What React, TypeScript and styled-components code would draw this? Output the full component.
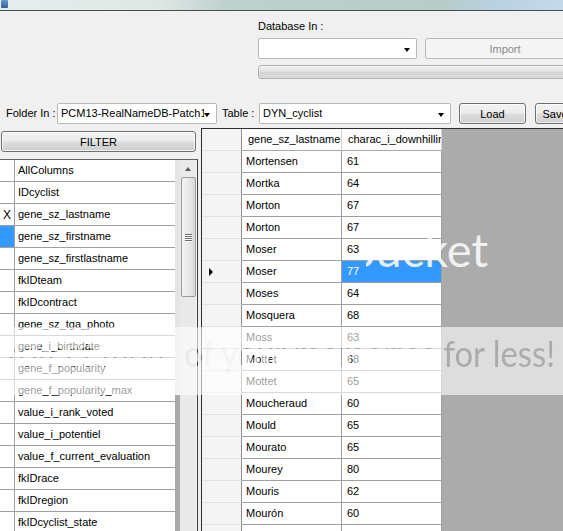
import styled, { createGlobalStyle } from 'styled-components';

const GlobalStyle = createGlobalStyle`
  html, body {
    margin: 0;
    padding: 0;
  }
  body {
    background: #f0f0f0;
    font-family: "Liberation Sans", Arial, sans-serif;
    font-size: 11px;
    color: #000;
    overflow: hidden;
  }
`;

const Window = styled.div`
  position: relative;
  width: 563px;
  height: 531px;
  overflow: hidden;
  display: flex;
  flex-direction: column;
  background: #f0f0f0;
`;

const TitleStrip = styled.div`
  height: 10px;
  flex: none;
  display: flex;
  border-bottom: 1px solid #44524f;
  background: linear-gradient(
    90deg,
    #e8eded 0%,
    #dfe7e5 28%,
    #bfd1ce 40%,
    #b8ccc8 78%,
    #b9d1e2 88%,
    #c5d9ea 100%
  );
`;

const AppIcon = styled.span`
  width: 7px;
  height: 8px;
  margin-left: 1px;
  background: linear-gradient(180deg, #6b97cf, #2f5f9f);
  border-radius: 1px;
`;

const TopPanel = styled.div`
  height: 117px;
  flex: none;
  display: flex;
  flex-direction: column;
  overflow: hidden;
`;

const DbBlock = styled.div`
  padding: 9px 0 0 258px;
  display: flex;
  flex-direction: column;
`;

const Label = styled.span<{ $w?: number }>`
  line-height: 13px;
  white-space: nowrap;
  ${(p) => (p.$w ? `width: ${p.$w}px; flex: none;` : '')}
`;

const DbRow = styled.div`
  display: flex;
  gap: 8px;
  margin-top: 5px;
`;

const Combo = styled.div<{ $w: number }>`
  position: relative;
  box-sizing: border-box;
  width: ${(p) => p.$w}px;
  height: 21px;
  flex: none;
  border: 1px solid #b5b8bd;
  border-radius: 2px;
  background: #fff;
  display: flex;
  align-items: center;
  padding: 0 12px 0 3px;
  overflow: hidden;
  white-space: nowrap;
`;

const ComboText = styled.span`
  overflow: hidden;
  white-space: nowrap;
  line-height: 13px;
`;

const Arrow = styled.span`
  position: absolute;
  right: 6px;
  top: 50%;
  margin-top: -1px;
  width: 0;
  height: 0;
  border-left: 3.5px solid transparent;
  border-right: 3.5px solid transparent;
  border-top: 4px solid #000;
`;

const Button = styled.div<{ $w: number; $disabled?: boolean }>`
  box-sizing: border-box;
  width: ${(p) => p.$w}px;
  height: 21px;
  flex: none;
  display: flex;
  align-items: center;
  justify-content: center;
  border-radius: 3px;
  border: 1px solid ${(p) => (p.$disabled ? '#b7babc' : '#707070')};
  color: ${(p) => (p.$disabled ? '#8a8a8a' : '#000')};
  background: ${(p) =>
    p.$disabled
      ? '#f4f4f4'
      : 'linear-gradient(180deg, #f3f3f3 0%, #ebebeb 48%, #dddddd 52%, #cfcfcf 100%)'};
  box-shadow: ${(p) => (p.$disabled ? 'none' : 'inset 0 0 0 1px rgba(255,255,255,0.7)')};
  white-space: nowrap;
`;

const Progress = styled.div`
  box-sizing: border-box;
  margin-top: 6px;
  height: 14px;
  width: 320px;
  border: 1px solid #b2b2b2;
  border-radius: 3px;
  background: linear-gradient(180deg, #f3f3f3 0%, #e2e2e2 45%, #d3d3d3 55%, #dcdcdc 100%);
`;

const ToolRow = styled.div`
  display: flex;
  align-items: center;
  margin-top: 23px;
  padding-left: 6px;
  height: 23px;
`;

const Spacer = styled.span<{ $w: number }>`
  width: ${(p) => p.$w}px;
  flex: none;
`;

const Main = styled.div`
  flex: 1;
  display: flex;
  min-height: 0;
`;

const LeftPanel = styled.div`
  width: 198px;
  flex: none;
  display: flex;
  flex-direction: column;
  padding-top: 3px;
`;

const FilterButton = styled(Button)`
  margin-left: 1px;
`;

const LeftGrid = styled.div`
  margin-top: 7px;
  flex: 1;
  display: flex;
  border-top: 1px solid #646464;
  border-right: 1px solid #3c3c3c;
  background: #fff;
  overflow: hidden;
`;

const FieldList = styled.div`
  width: 175px;
  flex: none;
`;

const FieldRow = styled.div`
  box-sizing: border-box;
  height: 22px;
  display: grid;
  grid-template-columns: 15px 1fr;
  border-bottom: 1px solid #a0a0a0;
`;

const FieldHead = styled.div<{ $sel?: boolean }>`
  border-right: 1px solid #a0a0a0;
  background: ${(p) => (p.$sel ? '#3399ff' : '#fff')};
  display: flex;
  align-items: center;
  justify-content: center;
  font-size: 12px;
`;

const FieldCell = styled.div`
  padding-left: 3px;
  line-height: 21px;
  white-space: nowrap;
  overflow: hidden;
`;

const Gutter = styled.div`
  width: 5px;
  flex: none;
  background: linear-gradient(180deg, #e4e4e4 0px, #e4e4e4 235px, #a9a9a9 235px, #a9a9a9 100%);
`;

const ScrollBar = styled.div`
  width: 16px;
  flex: none;
  background: #e9e9e9;
  display: flex;
  flex-direction: column;
  align-items: center;
  border-right: 1px solid #f4f4f4;
`;

const ScrollUp = styled.div`
  height: 17px;
  width: 16px;
  display: flex;
  align-items: center;
  justify-content: center;
  &::after {
    content: '';
    border-left: 3.5px solid transparent;
    border-right: 3.5px solid transparent;
    border-bottom: 4px solid #5a5a5a;
  }
`;

const Thumb = styled.div`
  box-sizing: border-box;
  width: 15px;
  height: 120px;
  border: 1px solid #9a9a9a;
  border-radius: 2px;
  background: linear-gradient(90deg, #f3f3f3 0%, #e9e9e9 50%, #d9d9d9 100%);
  display: flex;
  flex-direction: column;
  align-items: center;
  justify-content: center;
  gap: 1px;
`;

const Grip = styled.span`
  width: 7px;
  height: 1px;
  background: #6a6a6a;
  box-shadow: 0 1px 0 #fff;
`;

const Between = styled.div`
  width: 3px;
  flex: none;
`;

const DataGrid = styled.div`
  flex: 1;
  border-top: 1px solid #2e2e2e;
  border-left: 1px solid #2e2e2e;
  background: #ababab;
  overflow: hidden;
`;

const DataRow = styled.div`
  box-sizing: border-box;
  height: 22px;
  display: grid;
  grid-template-columns: 40px 100px 100px;
`;

const RowHead = styled.div`
  box-sizing: border-box;
  background: #f4f4f4;
  border-right: 1px solid #8e8e8e;
  border-bottom: 1px solid #e2e2e2;
  display: flex;
  align-items: center;
  padding-left: 7px;
`;

const HeadCell = styled.div`
  box-sizing: border-box;
  background: #fcfcfc;
  border-right: 1px solid #d6d6d6;
  border-bottom: 1px solid #a8a8a8;
  padding-left: 6px;
  line-height: 21px;
  white-space: nowrap;
  overflow: hidden;
`;

const Cell = styled.div<{ $sel?: boolean; $pad: number }>`
  box-sizing: border-box;
  background: ${(p) => (p.$sel ? '#3399ff' : '#fff')};
  color: ${(p) => (p.$sel ? '#fff' : '#000')};
  border-right: 1px solid #a0a0a0;
  border-bottom: 1px solid #a0a0a0;
  padding-left: ${(p) => p.$pad}px;
  line-height: 21px;
  white-space: nowrap;
  overflow: hidden;
`;

const Pointer = styled.span`
  width: 0;
  height: 0;
  border-top: 4px solid transparent;
  border-bottom: 4px solid transparent;
  border-left: 4px solid #000;
`;

const Watermark = styled.svg`
  position: absolute;
  left: 0;
  top: 0;
  pointer-events: none;
`;

const fields: { name: string; mark?: string; sel?: boolean }[] = [
  { name: 'AllColumns' },
  { name: 'IDcyclist' },
  { name: 'gene_sz_lastname', mark: 'X' },
  { name: 'gene_sz_firstname', sel: true },
  { name: 'gene_sz_firstlastname' },
  { name: 'fkIDteam' },
  { name: 'fkIDcontract' },
  { name: 'gene_sz_tga_photo' },
  { name: 'gene_i_birthdate' },
  { name: 'gene_f_popularity' },
  { name: 'gene_f_popularity_max' },
  { name: 'value_i_rank_voted' },
  { name: 'value_i_potentiel' },
  { name: 'value_f_current_evaluation' },
  { name: 'fkIDrace' },
  { name: 'fkIDregion' },
  { name: 'fkIDcyclist_state' },
];

const cyclists: [string, string][] = [
  ['Mortensen', '61'],
  ['Mortka', '64'],
  ['Morton', '67'],
  ['Morton', '67'],
  ['Moser', '63'],
  ['Moser', '77'],
  ['Moses', '64'],
  ['Mosquera', '68'],
  ['Moss', '63'],
  ['Mottet', '68'],
  ['Mottet', '65'],
  ['Moucheraud', '60'],
  ['Mould', '65'],
  ['Mourato', '65'],
  ['Mourey', '80'],
  ['Mouris', '62'],
  ['Mourón', '60'],
  ['', ''],
];

const SELECTED = 5;

export default function App() {
  return (
    <Window>
      <GlobalStyle />
      <TitleStrip>
        <AppIcon />
      </TitleStrip>

      <TopPanel>
        <DbBlock>
          <Label>Database In :</Label>
          <DbRow>
            <Combo $w={159}>
              <ComboText />
              <Arrow />
            </Combo>
            <Button $w={160} $disabled>
              Import
            </Button>
          </DbRow>
          <Progress />
        </DbBlock>

        <ToolRow>
          <Label $w={51}>Folder In :</Label>
          <Combo $w={160}>
            <ComboText>PCM13-RealNameDB-Patch1</ComboText>
            <Arrow />
          </Combo>
          <Spacer $w={5} />
          <Label $w={37}>Table :</Label>
          <Combo $w={192}>
            <ComboText>DYN_cyclist</ComboText>
            <Arrow />
          </Combo>
          <Spacer $w={8} />
          <Button $w={67}>Load</Button>
          <Spacer $w={9} />
          <Button $w={40}>Save</Button>
        </ToolRow>
      </TopPanel>

      <Main>
        <LeftPanel>
          <FilterButton $w={195}>FILTER</FilterButton>
          <LeftGrid>
            <FieldList>
              {fields.map((f, i) => (
                <FieldRow key={i}>
                  <FieldHead $sel={f.sel}>{f.mark}</FieldHead>
                  <FieldCell>{f.name}</FieldCell>
                </FieldRow>
              ))}
            </FieldList>
            <Gutter />
            <ScrollBar>
              <ScrollUp />
              <Thumb>
                <Grip />
                <Grip />
                <Grip />
                <Grip />
              </Thumb>
            </ScrollBar>
          </LeftGrid>
        </LeftPanel>

        <Between />

        <DataGrid>
          <DataRow>
            <RowHead />
            <HeadCell>gene_sz_lastname</HeadCell>
            <HeadCell>charac_i_downhilling</HeadCell>
          </DataRow>
          {cyclists.map(([name, val], i) => (
            <DataRow key={i}>
              <RowHead>{i === SELECTED && <Pointer />}</RowHead>
              <Cell $pad={4}>{name}</Cell>
              <Cell $pad={5} $sel={i === SELECTED}>
                {val}
              </Cell>
            </DataRow>
          ))}
        </DataGrid>
      </Main>

      <Watermark width={563} height={531}>
        <defs>
          <mask id="band-mask">
            <rect x={0} y={327} width={563} height={68} fill="#fff" />
            <text
              x={-12}
              y={367}
              fontSize={36}
              fontFamily="Lato, 'Open Sans', sans-serif"
              textLength={567}
              lengthAdjust="spacingAndGlyphs"
              fill="#000"
            >
              Protect more of your memories for less!
            </text>
          </mask>
          <clipPath id="logo-clip">
            <rect x={366} y={0} width={197} height={531} />
          </clipPath>
        </defs>
        <rect x={0} y={327} width={563} height={68} fill="#fff" fillOpacity={0.6} mask="url(#band-mask)" />
        <text
          x={227}
          y={267}
          fontSize={47}
          fontFamily="Lato, 'Open Sans', sans-serif"
          fill="#fff"
          fillOpacity={0.85}
          clipPath="url(#logo-clip)"
        >
          photobucket
        </text>
      </Watermark>
    </Window>
  );
}
